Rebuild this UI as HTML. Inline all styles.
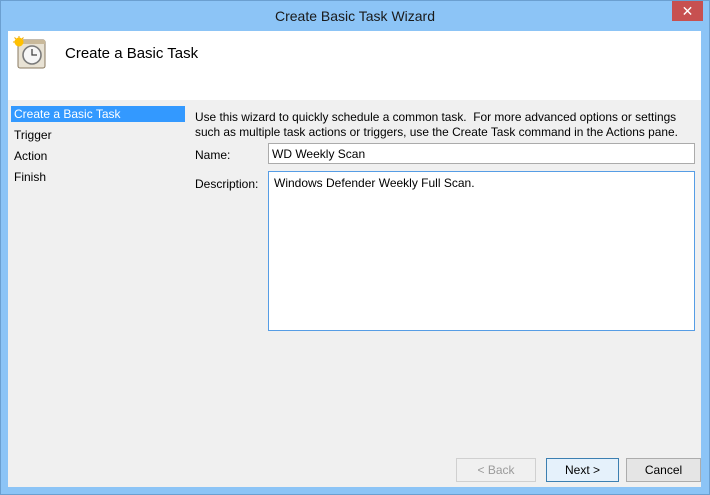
<!DOCTYPE html>
<html><head><style>
body{margin:0;width:710px;height:495px;background:#8cc4f6;font-family:"Liberation Sans",sans-serif;font-size:12px;color:#000;position:relative;overflow:hidden}
.frame{position:absolute;left:0;top:0;width:708px;height:493px;border:1px solid #6b9fd0}
.title{position:absolute;top:8px;left:0;width:710px;text-align:center;font-size:14px;color:#1a1a1a}
.close{position:absolute;left:672px;top:1px;width:31px;height:20px;background:#c75050;color:#fff;text-align:center;font-size:14px;line-height:20px}
.head{position:absolute;left:8px;top:31px;width:693px;height:69px;background:#fff}
.body{position:absolute;left:8px;top:100px;width:693px;height:387px;background:#f0f0f0}
.a{position:absolute;white-space:nowrap}
.sel{position:absolute;left:11px;top:106px;width:174px;height:16px;background:#3399ff}
.box{position:absolute;background:#fff;border:1px solid #ababab}
.btn{position:absolute;height:22px;border:1px solid #acacac;background:#e5e5e5;text-align:center;line-height:22px}
</style></head><body>
<div class="frame"></div>
<div class="title">Create Basic Task Wizard</div>
<div class="close">✕</div>
<div class="head"></div>
<div class="body"></div>
<svg class="a" style="left:13px;top:36px" width="34" height="34" viewBox="0 0 34 34">
<rect x="5" y="4" width="27" height="28" rx="2" fill="#e8e2d4" stroke="#8a7a60"/>
<rect x="5" y="4" width="27" height="4" fill="#c9b99a"/>
<circle cx="19" cy="19" r="9" fill="#f6f6f6" stroke="#7a7a7a" stroke-width="1.6"/>
<path d="M19 13v6h5" stroke="#444" stroke-width="1.3" fill="none"/>
<circle cx="6" cy="6" r="4.5" fill="#ffc000"/>
<path d="M6 0v2M0 6h2M1.5 1.5l1.5 1.5M10.5 1.5l-1.5 1.5" stroke="#f2a800" stroke-width="1"/>
</svg>
<div class="a" style="left:65px;top:45px;font-size:15px">Create a Basic Task</div>
<div class="sel"></div>
<div class="a" style="left:14px;top:107px;color:#fff">Create a Basic Task</div>
<div class="a" style="left:14px;top:128px">Trigger</div>
<div class="a" style="left:14px;top:149px">Action</div>
<div class="a" style="left:14px;top:170px">Finish</div>
<div class="a" style="left:195px;top:110px;font-size:11.9px">Use this wizard to quickly schedule a common task.&nbsp; For more advanced options or settings</div>
<div class="a" style="left:195px;top:125px;font-size:11.9px">such as multiple task actions or triggers, use the Create Task command in the Actions pane.</div>
<div class="a" style="left:195px;top:148px">Name:</div>
<div class="box" style="left:268px;top:143px;width:425px;height:19px"></div>
<div class="a" style="left:272px;top:147px">WD Weekly Scan</div>
<div class="a" style="left:195px;top:177px">Description:</div>
<div class="box" style="left:268px;top:171px;width:425px;height:158px;border-color:#569de5"></div>
<div class="a" style="left:274px;top:176px">Windows Defender Weekly Full Scan.</div>
<div class="btn" style="left:456px;top:458px;width:78px;color:#9a9a9a;background:#f0f0f0;border-color:#d0d0d0">&lt; Back</div>
<div class="btn" style="left:546px;top:458px;width:71px;border-color:#3c7fb1;background:#e5f1fb">Next &gt;</div>
<div class="btn" style="left:626px;top:458px;width:73px">Cancel</div>
</body></html>
